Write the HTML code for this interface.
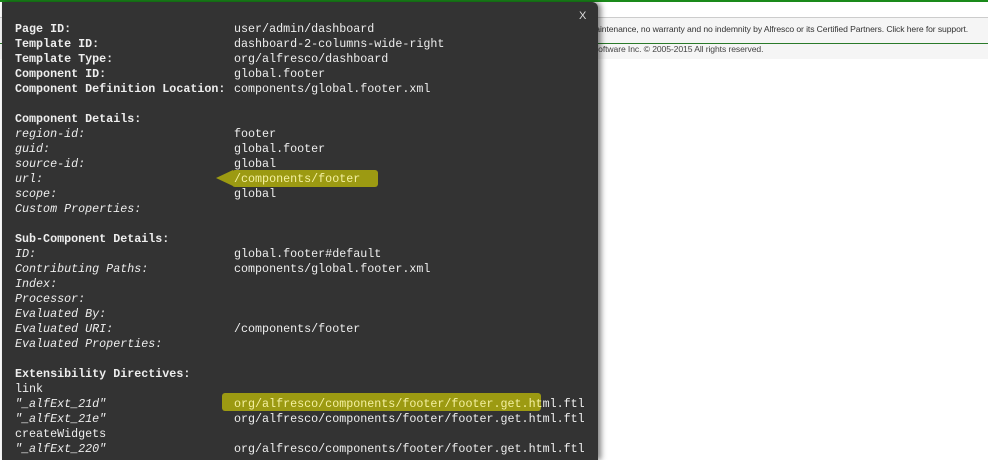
<!DOCTYPE html>
<html><head><style>
html,body{margin:0;width:988px;height:460px;overflow:hidden}
body{background:#fff;position:relative;font-family:"Liberation Sans",sans-serif}
.top{position:absolute;left:0;top:0;width:988px;height:2px;background:#1a8a1a}
.band{position:absolute;left:0;top:17px;width:988px;height:41px;background:#f5f5f5;border-top:1px solid #ccc}
.g2{position:absolute;left:0;top:43px;width:988px;height:1px;background:#2a7a2a}
.t1{position:absolute;left:368px;top:24px;font-size:8.6px;color:#333;white-space:nowrap;letter-spacing:-0.1px}
.t2{position:absolute;left:560px;top:44px;font-size:8.6px;color:#444;white-space:nowrap;letter-spacing:-0.1px}
.logo{position:absolute;left:150px;top:28px;font-size:24px;color:#8aa;opacity:.5}
.panel{position:absolute;left:2px;top:2px;width:596px;height:458px;background:#333;border-radius:0 6px 0 0;box-shadow:3px 0 6px rgba(0,0,0,.5)}
.x{position:absolute;left:579px;top:10px;color:#ddd;font-size:11px}
.l{position:absolute;left:15px;font-family:"Liberation Mono",monospace;font-size:11.7px;color:#eee;white-space:pre;line-height:15px}
.v{position:absolute;left:234px;font-family:"Liberation Mono",monospace;font-size:11.7px;color:#eee;white-space:pre;line-height:15px}
b{font-weight:bold}
.hl{position:absolute;background:#9c9a12;border-radius:3px}
</style></head><body>
<div class="top"></div><div class="band"></div><div class="g2"></div>
<div class="logo">Alfresco</div>
<div class="t1">Supplied free of charge with no support, no certification, no maintenance, no warranty and no indemnity by Alfresco or its Certified Partners. Click here for support.</div>
<div class="t2">Alfresco Software Inc. © 2005-2015 All rights reserved.</div>
<div class="panel"></div>
<div class="x">X</div>
<div class="hl" style="left:232px;top:170px;width:146px;height:17px"></div>
<div style="position:absolute;left:216px;top:170px;width:0;height:0;border-top:8px solid transparent;border-bottom:8px solid transparent;border-right:17px solid #9c9a12"></div>
<div class="hl" style="left:222px;top:393px;width:319px;height:18px"></div>
<div class="l" style="top:22px"><b>Page ID:
Template ID:
Template Type:
Component ID:
Component Definition Location:

Component Details:</b>
<i>region-id:
guid:
source-id:
url:
scope:
Custom Properties:</i>

<b>Sub-Component Details:</b>
<i>ID:
Contributing Paths:
Index:
Processor:
Evaluated By:
Evaluated URI:
Evaluated Properties:</i>

<b>Extensibility Directives:</b>
link
<i>"_alfExt_21d"
"_alfExt_21e"</i>
createWidgets
<i>"_alfExt_220"</i></div>
<div class="v" style="top:22px">user/admin/dashboard
dashboard-2-columns-wide-right
org/alfresco/dashboard
global.footer
components/global.footer.xml


footer
global.footer
global
<span style="color:#f4f0a0">/components/footer</span>
global



global.footer#default
components/global.footer.xml



/components/footer




<span style="color:#f4f0a0">org/alfresco/components/footer/footer.get.ht</span>ml.ftl
org/alfresco/components/footer/footer.get.html.ftl

org/alfresco/components/footer/footer.get.html.ftl</div>
</body></html>
